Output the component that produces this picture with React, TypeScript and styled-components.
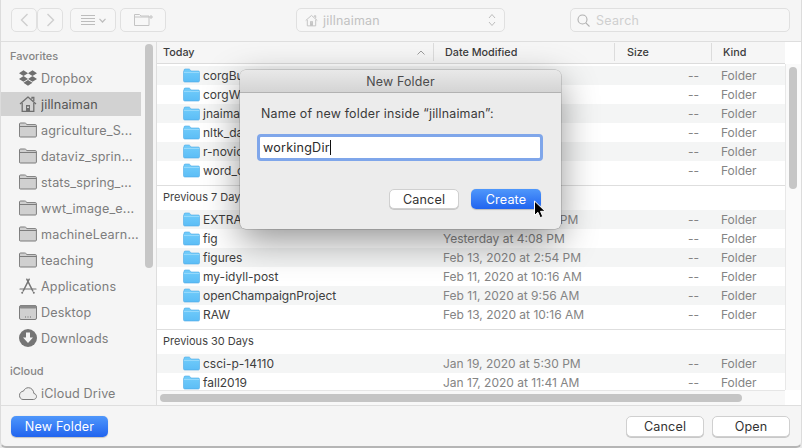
import React from "react";
import styled, { createGlobalStyle } from "styled-components";
import { FaDropbox } from "react-icons/fa";

const GlobalStyle = createGlobalStyle`
  html, body {
    margin: 0;
    padding: 0;
    background: #e9e9e9;
  }
  body {
    font-family: Inter, "Liberation Sans", sans-serif;
    overflow: hidden;
  }
`;

type FileRow = { name: string; date?: string };

const today: FileRow[] = [
  { name: "corgBuilder" },
  { name: "corgWeb" },
  { name: "jnaiman" },
  { name: "nltk_data" },
  { name: "r-novice" },
  { name: "word_count" },
];

const lastWeek: FileRow[] = [
  { name: "EXTRA", date: "Feb 13, 2020 at 3:21 PM" },
  { name: "fig", date: "Yesterday at 4:08 PM" },
  { name: "figures", date: "Feb 13, 2020 at 2:54 PM" },
  { name: "my-idyll-post", date: "Feb 11, 2020 at 10:16 AM" },
  { name: "openChampaignProject", date: "Feb 11, 2020 at 9:56 AM" },
  { name: "RAW", date: "Feb 13, 2020 at 10:16 AM" },
];

const lastMonth: FileRow[] = [
  { name: "csci-p-14110", date: "Jan 19, 2020 at 5:30 PM" },
  { name: "fall2019", date: "Jan 17, 2020 at 11:41 AM" },
];

const Window = styled.div`
  width: 802px;
  height: 448px;
  box-sizing: border-box;
  display: flex;
  flex-direction: column;
  background: #f5f5f5;
  border-left: 1px solid #dcdcdc;
  border-right: 1px solid #dcdcdc;
  border-bottom: 2px solid #b5b5b5;
  border-radius: 0 0 6px 6px;
  position: relative;
  overflow: hidden;
`;

const Toolbar = styled.div`
  height: 42px;
  box-sizing: border-box;
  flex: none;
  display: flex;
  align-items: flex-start;
  padding: 8px 11px 0 10px;
  border-bottom: 1px solid #dedede;
`;

const ToolButton = styled.div<{ $w: number; $ml?: number }>`
  width: ${(p) => p.$w}px;
  height: 24px;
  box-sizing: border-box;
  margin-left: ${(p) => p.$ml ?? 0}px;
  border: 1px solid #e0e0e0;
  border-radius: 5px;
  background: #f7f7f7;
  display: flex;
  align-items: center;
  justify-content: center;
  gap: 4px;
  flex: none;
  color: #c4c4c4;
`;

const PathPopup = styled(ToolButton)`
  justify-content: flex-start;
  padding: 0 8px;
  color: #c2c2c2;
  font-size: 12.5px;
  letter-spacing: 0.2px;
`;

const PathLabel = styled.span`
  flex: 1;
  margin-left: 1px;
`;

const SearchField = styled(ToolButton)`
  justify-content: flex-start;
  padding: 0 6px;
  gap: 6px;
  color: #cfcfcf;
  font-size: 12.5px;
  letter-spacing: 0.3px;
`;

const Body = styled.div`
  flex: 1;
  min-height: 0;
  display: flex;
`;

const Sidebar = styled.aside`
  width: 155px;
  flex: none;
  display: flex;
  border-right: 1px solid #dedede;
  overflow: hidden;
`;

const SidebarList = styled.div`
  width: 140px;
  flex: none;
  padding-top: 3px;
`;

const SidebarGutter = styled.div`
  margin-left: 4px;
  padding-top: 2px;
`;

const SidebarThumb = styled.div`
  width: 8px;
  height: 224px;
  border-radius: 4px;
  background: #c6c6c6;
`;

const SidebarLabel = styled.div<{ $mt?: number }>`
  height: 21px;
  line-height: 22px;
  margin-top: ${(p) => p.$mt ?? 0}px;
  padding-left: 9px;
  font-size: 11px;
  font-weight: 500;
  color: #858585;
`;

const SidebarItem = styled.div<{ $selected?: boolean }>`
  height: 24px;
  margin-bottom: 2px;
  display: flex;
  align-items: center;
  padding-left: 18px;
  background: ${(p) => (p.$selected ? "#d2d2d2" : "transparent")};
  color: ${(p) => (p.$selected ? "#555" : "#7d7d7d")};
  font-size: 12.6px;
  letter-spacing: 0.15px;
`;

const SidebarIcon = styled.span`
  width: 18px;
  height: 18px;
  flex: none;
  margin-right: 4px;
  display: flex;
  align-items: center;
  justify-content: center;
  color: #6f6f6f;
`;

const SidebarText = styled.span`
  white-space: nowrap;
  overflow: hidden;
  text-overflow: ellipsis;
`;

const FileArea = styled.div`
  flex: 1;
  min-width: 0;
  display: flex;
  background: #fff;
`;

const FileColumn = styled.div`
  width: 628px;
  flex: none;
  display: flex;
  flex-direction: column;
`;

const ColumnHeader = styled.div`
  flex: none;
  display: flex;
  background: #f6f6f6;
  border-bottom: 1px solid #dcdcdc;
  box-sizing: border-box;
  height: 22px;
  font-size: 10.8px;
  font-weight: 500;
  color: #3c3c3c;
`;

const HeaderCell = styled.div<{ $w: number; $pl: number; $last?: boolean }>`
  width: ${(p) => p.$w}px;
  box-sizing: border-box;
  padding-left: ${(p) => p.$pl}px;
  display: flex;
  align-items: center;
  justify-content: space-between;
  margin: 1px 0 2px;
  border-right: ${(p) => (p.$last ? "none" : "1px solid #dcdcdc")};
`;

const SortMark = styled.svg`
  margin-right: 8px;
`;

const ListViewport = styled.div`
  flex: 1;
  min-height: 0;
  overflow: hidden;
`;

const Section = styled.section<{ $pt?: number }>`
  padding-top: ${(p) => p.$pt ?? 0}px;
  padding-bottom: 5px;
  border-bottom: 1px solid #dedede;
`;

const SectionTitle = styled.div`
  height: 24px;
  line-height: 23px;
  padding-left: 6px;
  font-size: 11px;
  color: #3f3f3f;
`;

const Row = styled.div<{ $odd: boolean }>`
  height: 19px;
  box-sizing: border-box;
  padding-bottom: 1px;
  display: grid;
  grid-template-columns: 286px 170px 86px 86px;
  align-items: center;
  background: ${(p) => (p.$odd ? "#f4f5f5" : "#fff")};
  font-size: 12px;
  white-space: nowrap;
`;

const NameCell = styled.div`
  display: flex;
  align-items: center;
  padding-left: 26px;
  color: #3e3e3e;
`;

const MutedCell = styled.div`
  color: #848484;
`;

const SizeCell = styled(MutedCell)`
  text-align: right;
`;

const KindCell = styled(MutedCell)`
  padding-left: 22px;
`;

const HScrollTrack = styled.div`
  flex: none;
  border-top: 1px solid #e6e6e6;
  background: #f8f8f8;
  padding: 3px 0 0 3px;
  box-sizing: border-box;
  height: 15px;
`;

const HScrollThumb = styled.div`
  width: 582px;
  height: 8px;
  border-radius: 4px;
  background: #c5c5c5;
`;

const VGutter = styled.div`
  flex: 1;
  display: flex;
  flex-direction: column;
  background: #fff;
`;

const VCorner = styled.div<{ $h: number }>`
  height: ${(p) => p.$h}px;
  flex: none;
`;

const VTrack = styled.div`
  flex: 1;
  background: #fafafa;
  border-left: 1px solid #e8e8e8;
  padding: 3px 0 0 3px;
`;

const VThumb = styled.div`
  width: 8px;
  height: 122px;
  border-radius: 4px;
  background: #c6c6c6;
`;

const Footer = styled.footer`
  flex: none;
  height: 41px;
  box-sizing: border-box;
  display: flex;
  align-items: flex-start;
  padding: 10px 10px 0 10px;
  border-top: 1px solid #dedede;
`;

const Button = styled.div<{ $w: number; $h?: number; $primary?: boolean; $ml?: number }>`
  width: ${(p) => p.$w}px;
  height: ${(p) => p.$h ?? 21}px;
  box-sizing: border-box;
  flex: none;
  margin-left: ${(p) => p.$ml ?? 0}px;
  display: flex;
  align-items: center;
  justify-content: center;
  border-radius: 5px;
  font-size: 12.6px;
  letter-spacing: 0.15px;
  color: ${(p) => (p.$primary ? "#fff" : "#333")};
  background: ${(p) =>
    p.$primary ? "linear-gradient(#4f97fb, #2164ef)" : "#fff"};
  border: ${(p) => (p.$primary ? "none" : "1px solid #d0d0d0")};
  box-shadow: ${(p) =>
    p.$primary ? "0 0.5px 1px rgba(0,0,0,.2)" : "0 1px 0 #c8c8c8"};
`;

const Dialog = styled.div`
  position: absolute;
  left: 239px;
  top: 70px;
  width: 321px;
  height: 159px;
  box-sizing: border-box;
  background: #ececec;
  border-radius: 6px;
  box-shadow: 0 0 0 0.5px rgba(0, 0, 0, 0.25), 0 12px 36px rgba(0, 0, 0, 0.42);
  display: flex;
  flex-direction: column;
  overflow: hidden;
`;

const DialogTitle = styled.div`
  height: 22px;
  flex: none;
  display: flex;
  align-items: center;
  justify-content: center;
  background: linear-gradient(#e9e9e9, #d4d4d4);
  border-bottom: 1px solid #b2b2b2;
  font-size: 12.4px;
  letter-spacing: 0.2px;
  color: #4b4b4b;
`;

const DialogBody = styled.div`
  flex: 1;
  padding: 12px 20px 0 21px;
  display: flex;
  flex-direction: column;
`;

const DialogPrompt = styled.div`
  height: 18px;
  line-height: 18px;
  font-size: 12.4px;
  letter-spacing: 0.2px;
  color: #3a3a3a;
  white-space: nowrap;
`;

const NameInput = styled.div`
  margin: 11px 0 0 -4px;
  height: 27px;
  width: 286px;
  box-sizing: border-box;
  border: 3px solid #7fa6ea;
  border-radius: 4px;
  background: #fff;
  display: flex;
  align-items: center;
  padding-left: 3px;
  font-size: 12.6px;
  letter-spacing: 0.2px;
  color: #2c2c2c;
`;

const Caret = styled.span`
  width: 1px;
  height: 15px;
  background: #111;
`;

const DialogActions = styled.div`
  display: flex;
  justify-content: flex-end;
  gap: 12px;
  margin-top: 28px;
`;

const Pointer = styled.svg`
  position: absolute;
  left: 532px;
  top: 200px;
`;

const BlueFolder = () => (
  <svg width="17" height="15" viewBox="0 0 17 15" style={{ marginRight: 3, flex: "none" }}>
    <defs>
      <linearGradient id="folderFill" x1="0" y1="0" x2="0" y2="1">
        <stop offset="0" stopColor="#72cdfb" />
        <stop offset="1" stopColor="#5cbdf6" />
      </linearGradient>
    </defs>
    <path
      d="M1 3V2.2C1 1.5 1.5 1 2.2 1h3.6c.5 0 .8.2 1.1.5L8 3h7.4c.6 0 1.1.5 1.1 1.1v8.7c0 .7-.5 1.2-1.2 1.2H1.8C1 14 .5 13.5.5 12.8V3.8C.5 3.4.7 3.1 1 3z"
      fill="url(#folderFill)"
      stroke="#4ea9e6"
      strokeWidth="0.6"
    />
    <path d="M.8 4.4h15.6" stroke="#a6e0fd" strokeWidth="0.8" />
  </svg>
);

const Rows = ({ items }: { items: FileRow[] }) => (
  <>
    {items.map((f, i) => (
      <Row key={f.name} $odd={i % 2 === 0}>
        <NameCell>
          <BlueFolder />
          {f.name}
        </NameCell>
        <MutedCell>{f.date}</MutedCell>
        <SizeCell>--</SizeCell>
        <KindCell>Folder</KindCell>
      </Row>
    ))}
  </>
);

const HouseIcon = ({ size = 18 }: { size?: number }) => (
  <svg width={size} height={size} viewBox="0 0 18 18" fill="none" stroke="currentColor" strokeWidth="1.3">
    <path d="M1 9 9 2l8 7" strokeLinejoin="round" />
    <path d="M13 4V2.4h1.8V6" />
    <path d="M3.2 8v8.4h11.6V8" />
    <rect x="7" y="10" width="4" height="6.4" fill="currentColor" stroke="none" />
    <rect x="8" y="11.5" width="2" height="1.5" fill="#d2d2d2" stroke="none" />
  </svg>
);

const OutlineFolder = () => (
  <svg width="18" height="16" viewBox="0 0 18 16" fill="#d0d0d0" stroke="#7c7c7c" strokeWidth="1">
    <path d="M.5 3V2c0-.6.4-1 1-1h4.2c.4 0 .7.1 1 .4L8 2.6h8.4c.6 0 1 .4 1 1V14c0 .6-.4 1-1 1h-15c-.6 0-1-.4-1-1z" />
    <path d="M.5 4.5h17" fill="none" />
  </svg>
);

const AppsIcon = () => (
  <svg width="18" height="17" viewBox="0 0 18 17" fill="none" stroke="#757575" strokeWidth="1.5" strokeLinecap="round">
    <path d="M7.8 1.2 13.8 13" />
    <path d="M10.2 1.2 4.2 13" />
    <path d="M1 11h16" strokeWidth="1.2" />
    <circle cx="3.2" cy="14.8" r="1" fill="#757575" stroke="none" />
    <circle cx="14.8" cy="14.8" r="1" fill="#757575" stroke="none" />
  </svg>
);

const DesktopIcon = () => (
  <svg width="18" height="15" viewBox="0 0 18 15">
    <rect x=".5" y=".5" width="17" height="14" rx="1.5" fill="#d0d0d0" stroke="#7c7c7c" />
    <rect x=".5" y=".5" width="17" height="3" rx="1.5" fill="#8a8a8a" />
    <path d="M6 12h1M8.5 12h1M11 12h1" stroke="#6f6f6f" strokeWidth="1" />
  </svg>
);

const DownloadsIcon = () => (
  <svg width="18" height="18" viewBox="0 0 18 18">
    <circle cx="9" cy="9" r="9" fill="#757575" />
    <path d="M7 3.5h4v5h3L9 14 4 8.5h3z" fill="#f5f5f5" />
  </svg>
);

const CloudIcon = () => (
  <svg width="18" height="13" viewBox="0 0 18 13" fill="#efefef" stroke="#7a7a7a" strokeWidth="1">
    <path d="M4 12.5h10.3c1.8 0 3.2-1.3 3.2-3 0-1.5-1.1-2.8-2.600-3C14.700 3.300 12.300.7 9.500.7 7.200.7 5.300 2 4.500 4.100 2.200 4.300.5 6 .5 8.300c0 2.400 1.500 4.200 3.500 4.200z" />
  </svg>
);

const Chevron = ({ dir }: { dir: "left" | "right" }) => (
  <svg width="9" height="14" viewBox="0 0 9 14" fill="none" stroke="#cfcfcf" strokeWidth="1.4">
    <path d={dir === "left" ? "M7.5 1 1.5 7l6 6" : "M1.5 1l6 6-6 6"} />
  </svg>
);

const favorites = [
  "agriculture_S...",
  "dataviz_sprin...",
  "stats_spring_...",
  "wwt_image_e...",
  "machineLearn...",
  "teaching",
];

export default function App() {
  return (
    <>
      <GlobalStyle />
      <Window>
        <Toolbar>
          <ToolButton $w={26}>
            <Chevron dir="left" />
          </ToolButton>
          <ToolButton $w={26}>
            <Chevron dir="right" />
          </ToolButton>
          <ToolButton $w={46} $ml={7}>
            <svg width="14" height="10" viewBox="0 0 14 10" stroke="#bdbdbd" strokeWidth="1">
              <path d="M0 .5h14M0 3.5h14M0 6.5h14M0 9.5h14" />
            </svg>
            <svg width="7" height="5" viewBox="0 0 7 5" fill="none" stroke="#bdbdbd" strokeWidth="1.2">
              <path d="M.5.8 3.5 4l3-3.2" />
            </svg>
          </ToolButton>
          <ToolButton $w={46} $ml={4}>
            <svg width="19" height="12" viewBox="0 0 19 12" fill="none" stroke="#c4c4c4" strokeWidth="1">
              <path d="M.5 11.5V.5h5L7 2h8v9.5z" />
              <path d="M.5 3H15" />
              <path d="M17 1v4M15 3h4" />
            </svg>
          </ToolButton>
          <PathPopup $w={209} $ml={130}>
            <HouseIcon size={13} />
            <PathLabel>jillnaiman</PathLabel>
            <svg width="8" height="14" viewBox="0 0 8 14" fill="none" stroke="#bdbdbd" strokeWidth="1">
              <path d="M1 5l3-3.5L7 5M1 9l3 3.5L7 9" />
            </svg>
          </PathPopup>
          <SearchField $w={220} $ml={65}>
            <svg width="13" height="13" viewBox="0 0 13 13" fill="none" stroke="#b0b0b0" strokeWidth="1.1">
              <circle cx="5.5" cy="5.5" r="4.5" />
              <path d="M8.8 8.8 12.5 12.5" />
            </svg>
            Search
          </SearchField>
        </Toolbar>

        <Body>
          <Sidebar>
            <SidebarList>
              <SidebarLabel>Favorites</SidebarLabel>
              <SidebarItem>
                <SidebarIcon>
                  <FaDropbox size={18} />
                </SidebarIcon>
                <SidebarText>Dropbox</SidebarText>
              </SidebarItem>
              <SidebarItem $selected>
                <SidebarIcon>
                  <HouseIcon />
                </SidebarIcon>
                <SidebarText>jillnaiman</SidebarText>
              </SidebarItem>
              {favorites.map((name) => (
                <SidebarItem key={name}>
                  <SidebarIcon>
                    <OutlineFolder />
                  </SidebarIcon>
                  <SidebarText>{name}</SidebarText>
                </SidebarItem>
              ))}
              <SidebarItem>
                <SidebarIcon>
                  <AppsIcon />
                </SidebarIcon>
                <SidebarText>Applications</SidebarText>
              </SidebarItem>
              <SidebarItem>
                <SidebarIcon>
                  <DesktopIcon />
                </SidebarIcon>
                <SidebarText>Desktop</SidebarText>
              </SidebarItem>
              <SidebarItem>
                <SidebarIcon>
                  <DownloadsIcon />
                </SidebarIcon>
                <SidebarText>Downloads</SidebarText>
              </SidebarItem>
              <SidebarLabel $mt={10}>iCloud</SidebarLabel>
              <SidebarItem>
                <SidebarIcon>
                  <CloudIcon />
                </SidebarIcon>
                <SidebarText>iCloud Drive</SidebarText>
              </SidebarItem>
            </SidebarList>
            <SidebarGutter>
              <SidebarThumb />
            </SidebarGutter>
          </Sidebar>

          <FileArea>
            <FileColumn>
              <ColumnHeader>
                <HeaderCell $w={277} $pl={6}>
                  Today
                  <SortMark width="8" height="5" viewBox="0 0 8 5" fill="none" stroke="#9c9c9c" strokeWidth="1">
                    <path d="M.5 4.5 4 1l3.5 3.5" />
                  </SortMark>
                </HeaderCell>
                <HeaderCell $w={181} $pl={11}>Date Modified</HeaderCell>
                <HeaderCell $w={97} $pl={12}>Size</HeaderCell>
                <HeaderCell $w={73} $pl={11} $last>Kind</HeaderCell>
              </ColumnHeader>
              <ListViewport>
                <Section $pt={2}>
                  <Rows items={today} />
                </Section>
                <Section>
                  <SectionTitle>Previous 7 Days</SectionTitle>
                  <Rows items={lastWeek} />
                </Section>
                <Section>
                  <SectionTitle>Previous 30 Days</SectionTitle>
                  <Rows items={lastMonth} />
                </Section>
              </ListViewport>
              <HScrollTrack>
                <HScrollThumb />
              </HScrollTrack>
            </FileColumn>
            <VGutter>
              <VCorner $h={22} />
              <VTrack>
                <VThumb />
              </VTrack>
              <VCorner $h={15} />
            </VGutter>
          </FileArea>
        </Body>

        <Footer>
          <Button $w={97} $primary>New Folder</Button>
          <Button $w={78} $ml={518}>Cancel</Button>
          <Button $w={78} $ml={8}>Open</Button>
        </Footer>

        <Dialog>
          <DialogTitle>New Folder</DialogTitle>
          <DialogBody>
            <DialogPrompt>Name of new folder inside “jillnaiman”:</DialogPrompt>
            <NameInput>
              workingDir
              <Caret />
            </NameInput>
            <DialogActions>
              <Button $w={70} $h={20}>Cancel</Button>
              <Button $w={70} $h={20} $primary>Create</Button>
            </DialogActions>
          </DialogBody>
        </Dialog>

        <Pointer width="14" height="20" viewBox="0 0 14 20">
          <path d="M1.5 1v14.5l3.4-3.2 2.3 5.4 2.6-1.1-2.3-5.300h4.700z" fill="#000" stroke="#fff" strokeWidth="1" />
        </Pointer>
      </Window>
    </>
  );
}
